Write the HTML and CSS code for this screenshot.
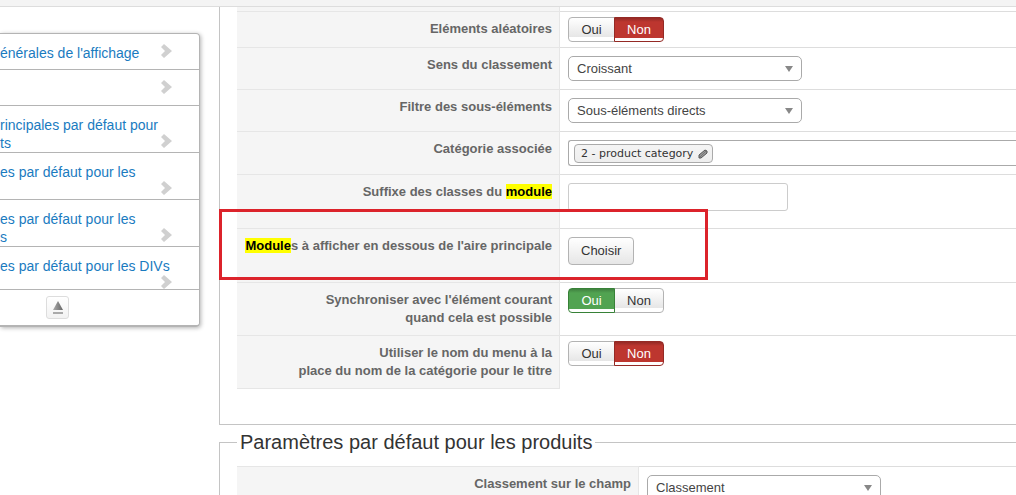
FILE: index.html
```html
<!DOCTYPE html>
<html lang="fr">
<head>
  <meta charset="UTF-8">
  <meta name="viewport" content="width=device-width, initial-scale=1">
  <title>Paramètres du type</title>
  <link rel="stylesheet" href="styles.css">
</head>

<body>

  <div class="topbar"></div>

  <div class="layout">

    <nav class="sidebar">
      <ul class="menu">
        <li class="one-line">
          <a href="#affichage">énérales de l'affichage</a>
          <svg class="chevron" viewBox="0 0 11 14"><path d="M0 3L3 0L11 7L3 14L0 11L4 7Z"/></svg>
        </li>
        <li class="one-line">
          <a href="#general"></a>
          <svg class="chevron" viewBox="0 0 11 14"><path d="M0 3L3 0L11 7L3 14L0 11L4 7Z"/></svg>
        </li>
        <li>
          <a href="#produits">rincipales par défaut pour<br>ts</a>
          <svg class="chevron" viewBox="0 0 11 14"><path d="M0 3L3 0L11 7L3 14L0 11L4 7Z"/></svg>
        </li>
        <li>
          <a href="#defaut-1">es par défaut pour les</a>
          <svg class="chevron" viewBox="0 0 11 14"><path d="M0 3L3 0L11 7L3 14L0 11L4 7Z"/></svg>
        </li>
        <li>
          <a href="#defaut-2">es par défaut pour les<br>s</a>
          <svg class="chevron" viewBox="0 0 11 14"><path d="M0 3L3 0L11 7L3 14L0 11L4 7Z"/></svg>
        </li>
        <li class="last">
          <a href="#defaut-3">es par défaut pour les DIVs</a>
          <svg class="chevron" viewBox="0 0 11 14"><path d="M0 3L3 0L11 7L3 14L0 11L4 7Z"/></svg>
        </li>
      </ul>
      <div class="menu-footer">
        <button class="collapse-btn" type="button" aria-label="Replier">
          <svg width="10" height="14" viewBox="0 0 10 14">
            <defs>
              <linearGradient id="eject" x1="0" x2="1"><stop offset="0" stop-color="#aaa"/><stop offset="1" stop-color="#666"/></linearGradient>
            </defs>
            <path d="M5 0L10 9H0Z" fill="url(#eject)"/>
            <path d="M0 11H10V13H0Z" fill="#aaa"/>
          </svg>
        </button>
      </div>
    </nav>

    <main class="content">

      <section class="panel">
        <div class="row row-end"><div class="name"></div><div class="value"></div></div>

        <div class="row">
          <div class="name" id="random">Eléments aléatoires</div>
          <div class="value tight">
            <div class="switch" role="radiogroup" aria-labelledby="random">
              <input type="radio" name="random" id="random1"><label for="random1">Oui</label>
              <input type="radio" name="random" id="random0" class="no" checked><label for="random0">Non</label>
            </div>
          </div>
        </div>

        <div class="row">
          <label class="name" for="direction">Sens du classement</label>
          <div class="value">
            <div class="select">
              <select id="direction"><option>Croissant</option><option>Décroissant</option></select>
            </div>
          </div>
        </div>

        <div class="row">
          <label class="name" for="filter">Filtre des sous-éléments</label>
          <div class="value">
            <div class="select">
              <select id="filter"><option>Sous-éléments directs</option></select>
            </div>
          </div>
        </div>

        <div class="row">
          <div class="name">Catégorie associée</div>
          <div class="value">
            <div class="tags">
              <button class="tag" type="button">2 - product category
                <svg width="10" height="10" viewBox="0 0 10 10"><path d="M1 9V6L7 1L9 2V4L3 9Z" fill="#999" stroke="#555"/><path d="M2 8L8 2" stroke="#777"/></svg>
              </button>
            </div>
          </div>
        </div>

        <div class="row">
          <label class="name" for="suffix">Suffixe des classes du <mark>module</mark></label>
          <div class="value">
            <input class="text" type="text" id="suffix">
          </div>
        </div>

        <div class="row highlighted">
          <label class="name" for="modules"><mark>Module</mark>s à afficher en dessous de l'aire principale</label>
          <div class="value">
            <button class="btn" type="button" id="modules">Choisir</button>
          </div>
        </div>

        <div class="row">
          <div class="name" id="sync">Synchroniser avec l'élément courant<br>quand cela est possible</div>
          <div class="value tight">
            <div class="switch" role="radiogroup" aria-labelledby="sync">
              <input type="radio" name="sync" id="sync1" class="yes" checked><label for="sync1">Oui</label>
              <input type="radio" name="sync" id="sync0"><label for="sync0">Non</label>
            </div>
          </div>
        </div>

        <div class="row">
          <div class="name" id="menuname">Utiliser le nom du menu à la<br>place du nom de la catégorie pour le titre</div>
          <div class="value tight">
            <div class="switch" role="radiogroup" aria-labelledby="menuname">
              <input type="radio" name="menuname" id="menuname1"><label for="menuname1">Oui</label>
              <input type="radio" name="menuname" id="menuname0" class="no" checked><label for="menuname0">Non</label>
            </div>
          </div>
        </div>
      </section>

      <fieldset class="group">
        <legend>Paramètres par défaut pour les produits</legend>
        <div class="row">
          <label class="name" for="field">Classement sur le champ</label>
          <div class="value">
            <div class="select">
              <select id="field"><option>Classement</option></select>
            </div>
          </div>
        </div>
      </fieldset>

    </main>
  </div>

</body>
</html>
```
FILE: styles.css
```css
:root {
  --link-color: #1a7bbf;
  --label-color: #666;
  --label-bg: #f5f5f5;
  --line: #ddd;
  --panel-line: #c4c4c4;
  --control-line: #aaa;
}

* { margin: 0; padding: 0; box-sizing: border-box; }

body {
  font-family: "Liberation Sans", Arial, sans-serif;
  font-size: 14px;
  line-height: 18px;
  color: #333;
  background: white;
  overflow: hidden;
}

.topbar {
  height: 7px;
  background: #f4f4f4;
  border-bottom: 1px solid #ddd;
}

.layout {
  display: flex;
  align-items: flex-start;
  gap: 19px;
}

/* Sidebar */

.sidebar {
  flex: 0 0 200px;
  margin-top: 26px;
  border: 1px solid #b4b4b4;
  border-left: none;
  border-bottom-width: 2px;
  border-radius: 0 4px 4px 0;
  box-shadow: 1px 1px 4px rgba(0, 0, 0, 0.3);
}

.menu {
  list-style: none;
}

.menu li {
  display: flex;
  justify-content: space-between;
  align-items: flex-end;
  height: 47px;
  padding: 10px 27px 4px 0;
  border-bottom: 1px solid #b4b4b4;
}

.menu li.one-line {
  height: 36px;
  padding-bottom: 11px;
}

.menu li.last {
  height: 43px;
  padding-bottom: 0;
}

.menu a {
  align-self: flex-start;
  color: var(--link-color);
  text-decoration: none;
  white-space: nowrap;
}

.chevron {
  flex: 0 0 11px;
  height: 14px;
  margin-left: -11px;
  fill: #d0d0d0;
}

.menu-footer {
  padding: 6px 0 6px 46px;
}

.collapse-btn {
  display: flex;
  align-items: center;
  justify-content: center;
  width: 23px;
  height: 23px;
  border: 1px solid #ddd;
  border-radius: 3px;
  background: linear-gradient(#fff, #f2f2f2);
}

/* Settings */

.content {
  flex: 1;
  min-width: 0;
}

.panel {
  padding: 0 0 35px 17px;
  border-left: 1px solid var(--panel-line);
  border-bottom: 1px solid var(--panel-line);
}

.row {
  display: flex;
}

.name {
  flex: 0 0 323px;
  padding: 8px 7px;
  border-top: 1px solid #e6e6e6;
  border-right: 1px solid #e6e6e6;
  background: var(--label-bg);
  color: var(--label-color);
  font-size: 13px;
  font-weight: bold;
  text-align: right;
  white-space: nowrap;
}

.value {
  flex: 1;
  min-width: 0;
  padding: 8px 0 8px 8px;
  border-top: 1px solid var(--line);
}

.value.tight {
  padding-top: 5px;
  padding-bottom: 5px;
}

.row-end .name,
.row-end .value {
  height: 4px;
  padding: 0;
  border-top: none;
}

.row:last-child .name {
  border-bottom: 1px solid #e6e6e6;
}

mark {
  background: #ff0;
  color: #000;
}

.highlighted {
  position: relative;
}

.highlighted::after {
  content: "";
  position: absolute;
  top: -19px;
  left: -18px;
  box-sizing: border-box;
  width: 489px;
  height: 71px;
  border: 3px solid #dc232b;
  pointer-events: none;
}

/* Controls */

.switch {
  display: flex;
  position: relative;
  font-size: 13px;
}

.switch input {
  position: absolute;
  opacity: 0;
}

.switch label {
  width: 47px;
  height: 25px;
  border: 1px solid #b3b3b3;
  border-radius: 4px 0 0 4px;
  background: linear-gradient(#fff, #e6e6e6 19px, #fff 19px);
  line-height: 24px;
  text-align: center;
}

.switch label:last-child {
  width: 50px;
  margin-left: -1px;
  border-radius: 0 4px 4px 0;
}

.switch .yes:checked + label,
.switch .no:checked + label {
  position: relative;
  color: white;
}

.switch .yes:checked + label {
  border-color: #378137;
  background: linear-gradient(#408140, #51a351 4px, #51a351 20px, #fff 20px);
}

.switch .no:checked + label {
  border-color: #942a25;
  background: linear-gradient(#942a25, #bd362f 4px, #bd362f 20px, #fff 20px);
}

.select {
  position: relative;
  width: 234px;
}

.select::after {
  content: "";
  position: absolute;
  top: 10px;
  right: 9px;
  border: 4px solid transparent;
  border-top: 6px solid #888;
  border-bottom: none;
  pointer-events: none;
}

select {
  display: block;
  width: 100%;
  height: 25px;
  padding: 0 8px;
  border: 1px solid var(--control-line);
  border-radius: 5px;
  background: white;
  color: #444;
  font: inherit;
  font-size: 13px;
  appearance: none;
}

.tags {
  display: flex;
  align-items: flex-start;
  height: 26px;
  padding: 3px 5px;
  border: 1px solid var(--control-line);
  border-right: none;
  border-radius: 3px 0 0 3px;
}

.tag {
  display: flex;
  align-items: center;
  gap: 5px;
  height: 19px;
  padding: 0 4px 0 6px;
  border: 1px solid #aaa;
  border-radius: 4px;
  background: linear-gradient(#f4f4f4, #eee);
  color: #333;
  font-family: "DejaVu Sans", Verdana, sans-serif;
  font-size: 11px;
}

.text {
  display: block;
  width: 220px;
  height: 28px;
  margin-bottom: 9px;
  padding: 4px 6px;
  border: 1px solid #ccc;
  border-radius: 3px;
  font: inherit;
}

.btn {
  display: block;
  height: 28px;
  margin-bottom: 9px;
  padding: 0 12px;
  border: 1px solid #b3b3b3;
  border-radius: 4px;
  background: linear-gradient(#fff, #e6e6e6);
  color: #333;
  font: inherit;
  font-size: 13px;
}

/* Next group */

.group {
  min-width: 0;
  margin-top: 5px;
  padding: 12px 0 17px 17px;
  border: 1px solid var(--panel-line);
  border-right: none;
}

.group legend {
  padding: 0 3px;
  font-size: 20px;
  line-height: 24px;
}

.group .name {
  flex-basis: 402px;
}
```
